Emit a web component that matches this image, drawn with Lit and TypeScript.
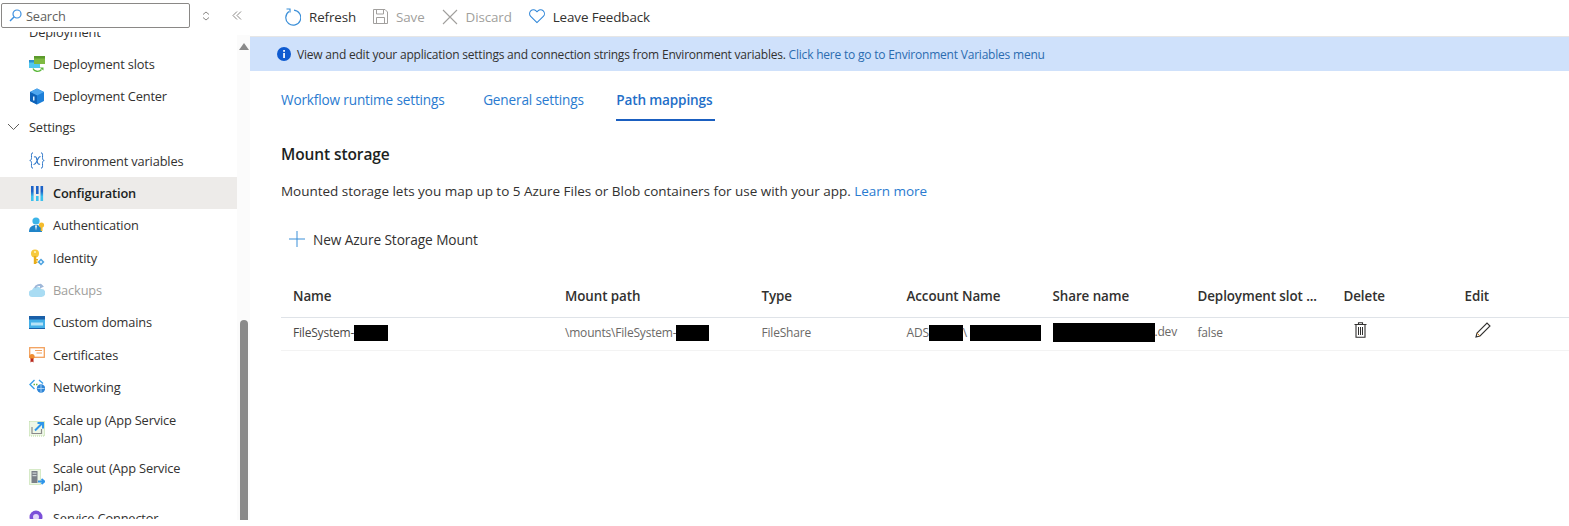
import { LitElement, html, css, svg } from "lit";
import { customElement } from "lit/decorators.js";

const icons: Record<string, unknown> = {
  slots: svg`<rect x="0" y="5" width="11" height="8" fill="#50c8f0"/><rect x="0" y="5" width="11" height="2.5" fill="#2a8fd0"/><rect x="5" y="1" width="11" height="8" fill="#7fba42"/><rect x="5" y="1" width="11" height="2.5" fill="#5c9a2c"/><path d="M4 13.500c1 3 6 4 8.500 1" fill="none" stroke="#5cb83c" stroke-width="1.300"/><path d="M10.500 12.500h4v3z" fill="#5cb83c"/>`,
  center: svg`<path d="M8 .5 15 4v9l-7 3.500L1 13V4z" fill="#1d7fd8"/><path d="M8 .5 15 4 8 7.500 1 4z" fill="#4fa6ee"/><path d="M8 7.500v9L1 13V4z" fill="#0f62b8"/><rect x="4" y="8.500" width="1.500" height="4" fill="#d8ecfb"/>`,
  env: svg`<path d="M4 .8C2 .8 2.500 3 2.500 5.500 2.500 7.500 2 8.300 .8 8.500 2 8.700 2.500 9.500 2.500 11.500 2.500 14 2 16.200 4 16.200M12 .8c2 0 1.500 2.200 1.500 4.700 0 2 .5 2.800 1.700 3-1.200.2-1.700 1-1.700 3 0 2.500.5 4.700-1.500 4.700" fill="none" stroke="#2a74c8"/><path d="M5 5c2.500-1 2.500 1 3 3.500s1 4.500 3 3.500M11.500 4.500c-2 0-3 3.500-3.500 4.500S6.200 13 4.500 12.500" fill="none" stroke="#2a74c8" stroke-width="1.100"/>`,
  config: svg`<defs><linearGradient id="cg" x1="0" y1="0" x2="0" y2="1"><stop offset=".35" stop-color="#1c62c8"/><stop offset=".7" stop-color="#3ac0ee"/></linearGradient></defs><rect x="2" y="1" width="2.600" height="15" fill="url(#cg)"/><rect x="7" y="1" width="2.600" height="8" fill="#1c62c8"/><rect x="7" y="11" width="2.600" height="5" fill="#3ac0ee"/><rect x="11.500" y="1" width="2.600" height="15" fill="url(#cg)"/>`,
  auth: svg`<circle cx="7" cy="4" r="3.600" fill="#3cb4e8"/><path d="M0 15c0-5 3-7 7-7s6 2 6 7z" fill="#1f84c8"/><path d="M6 8.500h2l-1 5z" fill="#fff"/><circle cx="12.500" cy="8" r="2.600" fill="#f5bc2c"/><rect x="11.700" y="9" width="1.800" height="5" fill="#f5bc2c"/>`,
  identity: svg`<circle cx="6" cy="4.500" r="4" fill="#f7c93c"/><circle cx="6" cy="3" r="1.100" fill="#fff3bf"/><rect x="4.800" y="7" width="2.500" height="8" fill="#e8ae1c"/><path d="M7 10h2v1.500H7zM7 12.500h1.500v1.500H7z" fill="#e8ae1c"/><path d="M12 9.500 15.500 13 12 16.500 8.500 13z" fill="#4fa3e0"/><circle cx="12" cy="13" r="1.200" fill="#d5ecfb"/>`,
  backups: svg`<path d="M3.500 15a3.500 3.500 0 0 1-.5-7A5 5 0 0 1 12 7a4 4 0 0 1 .5 8z" fill="#a9dcf3"/><path d="M6 6c1-3 5-4 7-2" fill="none" stroke="#9fb7d8" stroke-width="2"/><path d="M11 1.500l4 3-4 2z" fill="#9fb7d8"/>`,
  domains: svg`<rect x="0" y="2" width="16" height="13" fill="#45b0e8"/><rect x="0" y="2" width="16" height="3.500" fill="#1a5fa8"/><rect x="2" y="8.500" width="12" height="3" fill="#b6e3f8"/><rect x="0" y="14" width="16" height="1" fill="#1a5fa8"/>`,
  certs: svg`<rect x=".7" y="1.700" width="14.600" height="9.600" fill="#fff" stroke="#f2a05c" stroke-width="1.300"/><path d="M6 4.500h7M7.500 7h5.500" stroke="#f2a05c" stroke-width="1.200"/><circle cx="3" cy="10.500" r="2.600" fill="#ef8c30"/><path d="M1.500 12.500h3v4l-1.500-1-1.500 1z" fill="#b8281c"/>`,
  net: svg`<path d="M5.500 2 1 6.500l4.500 4.500M10 2l4 3.500" fill="none" stroke="#3aa0e8" stroke-width="1.400"/><path d="M4.500 6.500h1.500M7 6.500h1.500" stroke="#6cb33f" stroke-width="1.300"/><circle cx="12" cy="10.500" r="4.200" fill="#2f86d8"/><path d="M8.500 10.500h7M12 6.500v8" stroke="#bfe0fa" stroke-width=".8"/>`,
  up: svg`<rect x=".5" y="1.500" width="15" height="14.500" fill="#eef7e6" stroke="#b7d89c" stroke-dasharray="1 1"/><path d="M3 7v6.500h9.500V9" fill="none" stroke="#8a8a8a" stroke-width="1.200"/><path d="M6 10.500 13 3.500M8.500 3h5.500v5.500" fill="none" stroke="#2f96ea" stroke-width="2"/>`,
  out: svg`<rect x=".5" y=".5" width="11" height="15" fill="#eef7e6" stroke="#b7d89c" stroke-dasharray="1 1"/><rect x="2.500" y="2" width="6" height="12" fill="#7a8088"/><rect x="3.500" y="3.500" width="4" height="1.200" fill="#cfd4d8"/><rect x="3.500" y="6" width="4" height="1.200" fill="#cfd4d8"/><path d="M9 12.500h6M12.500 10l3 2.500-3 2.500" fill="none" stroke="#2f96ea" stroke-width="1.800"/>`,
  conn: svg`<circle cx="7" cy="8" r="6.500" fill="#7b4fd8"/><circle cx="7" cy="8" r="3" fill="#e4d8fb"/><path d="M9 14h6" stroke="#3aa0e8" stroke-width="2"/>`,
};

interface Item { label: string; icon?: string; two?: boolean; cls?: string }
const items: Item[] = [
  { label: "Deployment", cls: "group" },
  { label: "Deployment slots", icon: "slots" },
  { label: "Deployment Center", icon: "center" },
  { label: "Settings", cls: "group open" },
  { label: "Environment variables", icon: "env" },
  { label: "Configuration", icon: "config", cls: "sel" },
  { label: "Authentication", icon: "auth" },
  { label: "Identity", icon: "identity" },
  { label: "Backups", icon: "backups", cls: "dis" },
  { label: "Custom domains", icon: "domains" },
  { label: "Certificates", icon: "certs" },
  { label: "Networking", icon: "net" },
  { label: "Scale up (App Service plan)", icon: "up", two: true },
  { label: "Scale out (App Service plan)", icon: "out", two: true },
  { label: "Service Connector", icon: "conn" },
];

@customElement("app-root")
export class AppRoot extends LitElement {
  static styles = css`
    :host { display: flex; width: 1569px; height: 526px; overflow: hidden; background: #fff;
      font-family: "Open Sans", "Noto Sans", sans-serif; font-size: 12.800px; color: #323130; letter-spacing: -0.15px; }
    svg { display: block; flex: none; }
    .side { width: 237px; flex: none; display: flex; flex-direction: column; }
    .searchrow { height: 32px; flex: none; display: flex; align-items: flex-start; padding: 3px 0 0 1px; box-sizing: border-box; position: relative; z-index: 1; background: #fff; }
    .search { width: 189px; height: 25px; flex: none; box-sizing: border-box; border: 1px solid #8a8886; border-radius: 2px; display: flex; align-items: center; gap: 4px; padding-left: 7px; color: #605e5c; }
    .sort { margin: 8px 0 0 12px; }
    .coll { margin: 8px 0 0 22px; }
    .menu { height: 487px; overflow: hidden; }
    .list { margin-top: -16.500px; }
    .row { display: flex; align-items: center; height: 32.300px; padding-left: 29px; gap: 8px; box-sizing: border-box; }
    .row.two { height: 48.500px; line-height: 18px; }
    .row.two span { max-width: 135px; }
    .row.gap { margin-top: 1.500px; }
    .row.sel { background: #edebe9; font-weight: 600; color: #201f1e; }
    .row.dis { color: #a19f9d; }
    .row.open { padding-left: 7px; gap: 9px; padding-bottom: 3px; }
    .track { width: 13px; flex: none; margin-top: 35px; height: 485px; background: #fbfbfb; display: flex; flex-direction: column; align-items: center; justify-content: space-between; }
    .arrow { margin-top: 8px; }
    .thumb { width: 8.500px; height: 200px; background: #8a8a8a; border-radius: 4px 4px 0 0; margin-left: 1px; }
    .main { flex: 1; min-width: 0; display: flex; flex-direction: column; }
    .bar { height: 37px; flex: none; box-sizing: border-box; display: flex; align-items: center; padding: 0 0 3px 34px; border-bottom: 1px solid #e6e6e6; font-size: 13.400px; letter-spacing: -0.12px; }
    .btn { display: flex; align-items: center; gap: 8px; margin-right: 17px; }
    .btn.dis { color: #a19f9d; }
    .banner { height: 34px; flex: none; background: #cfe1fb; display: flex; align-items: center; padding-left: 27px; gap: 6px; font-size: 12px; letter-spacing: -0.21px; }
    a { color: #2b6cb0; text-decoration: none; }
    .tabs { display: flex; padding-left: 31px; margin-top: 14px; height: 36px; font-size: 13.600px; color: #2a7bd0; }
    .tab { margin-right: 38.500px; padding-top: 5px; height: 29px; }
    .tab.on { font-weight: 600; color: #1f6fc8; border-bottom: 2px solid #1a5fc0; width: 99px; margin-left: -6px; }
    h2 { margin: 22px 0 0 31px; font-size: 15.500px; font-weight: 600; color: #201f1e; line-height: 22px; letter-spacing: -0.1px; }
    .desc { margin: 17px 0 0 31px; font-size: 13.500px; line-height: 18px; letter-spacing: -0.02px; }
    .desc a { color: #2a7bd0; }
    .add { display: flex; align-items: center; margin: 29px 0 0 39px; gap: 8px; font-size: 13.700px; letter-spacing: -0.1px; height: 20px; }
    .table { margin: 29px 0 0 31px; }
    .cols { display: grid; grid-template-columns: 272px 196.500px 145px 146px 145px 146px 121px 1fr; padding-left: 12px; align-items: center; box-sizing: border-box; }
    .head { height: 40px; padding-bottom: 4px; border-bottom: 1px solid #dfe3e8; font-weight: 600; color: #323130; font-size: 13.400px; letter-spacing: -0.08px; }
    .body { height: 33px; padding-bottom: 3px; border-bottom: 1px solid #f3f3f3; color: #6b6967; font-size: 12px; letter-spacing: -0.2px; }
    .cell { white-space: nowrap; }
    .first { color: #4a4846; }
    .x { display: inline-block; background: #000; height: 16px; vertical-align: middle; }
    .x.a { width: 34px; }
    .x.b { width: 33px; }
    .x.c { width: 71px; margin-left: 3px; }
    .x.d { width: 102px; height: 19px; }
    .iconcell { padding-left: 10px; margin-top: -5px; }
  `;

  render() {
    return html`
      <div class="side">
        <div class="searchrow">
          <div class="search">
            <svg width="13" height="13" viewBox="0 0 13 13"><circle cx="8" cy="5" r="4" fill="none" stroke="#3b8fe0" stroke-width="1.200"/><path d="M5 8 1 12" stroke="#3b8fe0" stroke-width="1.400"/></svg>
            Search
          </div>
          <svg class="sort" width="8" height="10" viewBox="0 0 8 10"><path d="M1 3.500 4 1l3 2.500M1 6.500 4 9l3-2.500" fill="none" stroke="#8a8886"/></svg>
          <svg class="coll" width="10" height="9" viewBox="0 0 10 9"><path d="M5 .5 1 4.500l4 4M9 .5 5 4.500l4 4" fill="none" stroke="#8a8886"/></svg>
        </div>
        <div class="menu"><div class="list">
          ${items.map((i) => html`
            <div class="row ${i.two ? "two" : ""} ${i.icon === "up" ? "gap" : ""} ${i.cls ?? ""}">
              ${i.icon ? html`<svg width="16" height="17" viewBox="0 0 16 17">${icons[i.icon]}</svg>` : ""}
              ${i.cls?.includes("open") ? html`<svg width="13" height="8" viewBox="0 0 13 8"><path d="M1 1l5.500 5.500L12 1" fill="none" stroke="#605e5c"/></svg>` : ""}
              <span>${i.label}</span>
            </div>`)}
        </div></div>
      </div>
      <div class="track">
        <svg class="arrow" width="10" height="7" viewBox="0 0 10 7"><path d="M5 0l5 7H0z" fill="#8a8a8a"/></svg>
        <div class="thumb"></div>
      </div>
      <div class="main">
        <div class="bar">
          <div class="btn"><svg width="17" height="18" viewBox="0 0 17 18"><path d="M5 3.500A7.500 7.500 0 1 0 10 2.200" fill="none" stroke="#3b8fd8" stroke-width="1.200"/><path d="M2.500 1h3.500v3.500" fill="none" stroke="#3b8fd8" stroke-width="1.200"/></svg>Refresh</div>
          <div class="btn dis"><svg width="15" height="15" viewBox="0 0 15 15"><path d="M.5.500h11.500l2.500 2.500v11.500H.5z" fill="none" stroke="#a19f9d"/><path d="M3.500.500v4.500h7V.500M3.500 14.500V8.500h8v6" fill="none" stroke="#a19f9d"/></svg>Save</div>
          <div class="btn dis"><svg width="16" height="16" viewBox="0 0 16 16"><path d="M1 1l14 14M15 1 1 15" stroke="#a19f9d" stroke-width="1.100"/></svg>Discard</div>
          <div class="btn"><svg width="16" height="15" viewBox="0 0 17 15"><path d="M8.500 14 1.800 7.300a4 4 0 0 1 5.700-5.700l1 1 1-1a4 4 0 0 1 5.700 5.700z" fill="none" stroke="#2f86d8" stroke-width="1.100"/></svg>Leave Feedback</div>
        </div>
        <div class="banner">
          <svg width="14" height="14" viewBox="0 0 14 14"><circle cx="7" cy="7" r="7" fill="#0f5bd0"/><rect x="6.200" y="6" width="1.700" height="5" fill="#fff"/><rect x="6.200" y="3" width="1.700" height="1.800" fill="#fff"/></svg>
          <span>View and edit your application settings and connection strings from Environment variables. <a>Click here to go to Environment Variables menu</a></span>
        </div>
        <div class="tabs">
          <div class="tab">Workflow runtime settings</div>
          <div class="tab">General settings</div>
          <div class="tab on">Path mappings</div>
        </div>
        <h2>Mount storage</h2>
        <div class="desc">Mounted storage lets you map up to 5 Azure Files or Blob containers for use with your app. <a>Learn more</a></div>
        <div class="add"><svg width="16" height="16" viewBox="0 0 16 16"><path d="M8 0v16M0 8h16" stroke="#3b8fd8"/></svg>New Azure Storage Mount</div>
        <div class="table">
          <div class="cols head">
            <span>Name</span><span>Mount path</span><span>Type</span><span>Account Name</span><span>Share name</span><span>Deployment slot ...</span><span>Delete</span><span>Edit</span>
          </div>
          <div class="cols body">
            <span class="cell first">FileSystem-<i class="x a"></i></span>
            <span class="cell">\\mounts\\FileSystem-<i class="x b"></i></span>
            <span class="cell">FileShare</span>
            <span class="cell">ADS<i class="x a"></i>\\<i class="x c"></i></span>
            <span class="cell"><i class="x d"></i>.dev</span>
            <span class="cell">false</span>
            <span class="iconcell"><svg width="13" height="16" viewBox="0 0 13 16"><path d="M4.500 2.500V.700h4v1.800M.5 2.500h12M2 2.500v12.800h9V2.500" fill="none" stroke="#323130" stroke-width="1.100"/><path d="M4.500 5v8M6.500 5v8M8.500 5v8" stroke="#323130"/></svg></span>
            <span class="iconcell"><svg width="16" height="16" viewBox="0 0 16 16"><path d="M1 15l1-4L12 1l3 3L5 14z" fill="none" stroke="#323130" stroke-width="1.100"/><path d="M2 11l3 3" stroke="#c8862a"/></svg></span>
          </div>
        </div>
      </div>
    `;
  }
}
